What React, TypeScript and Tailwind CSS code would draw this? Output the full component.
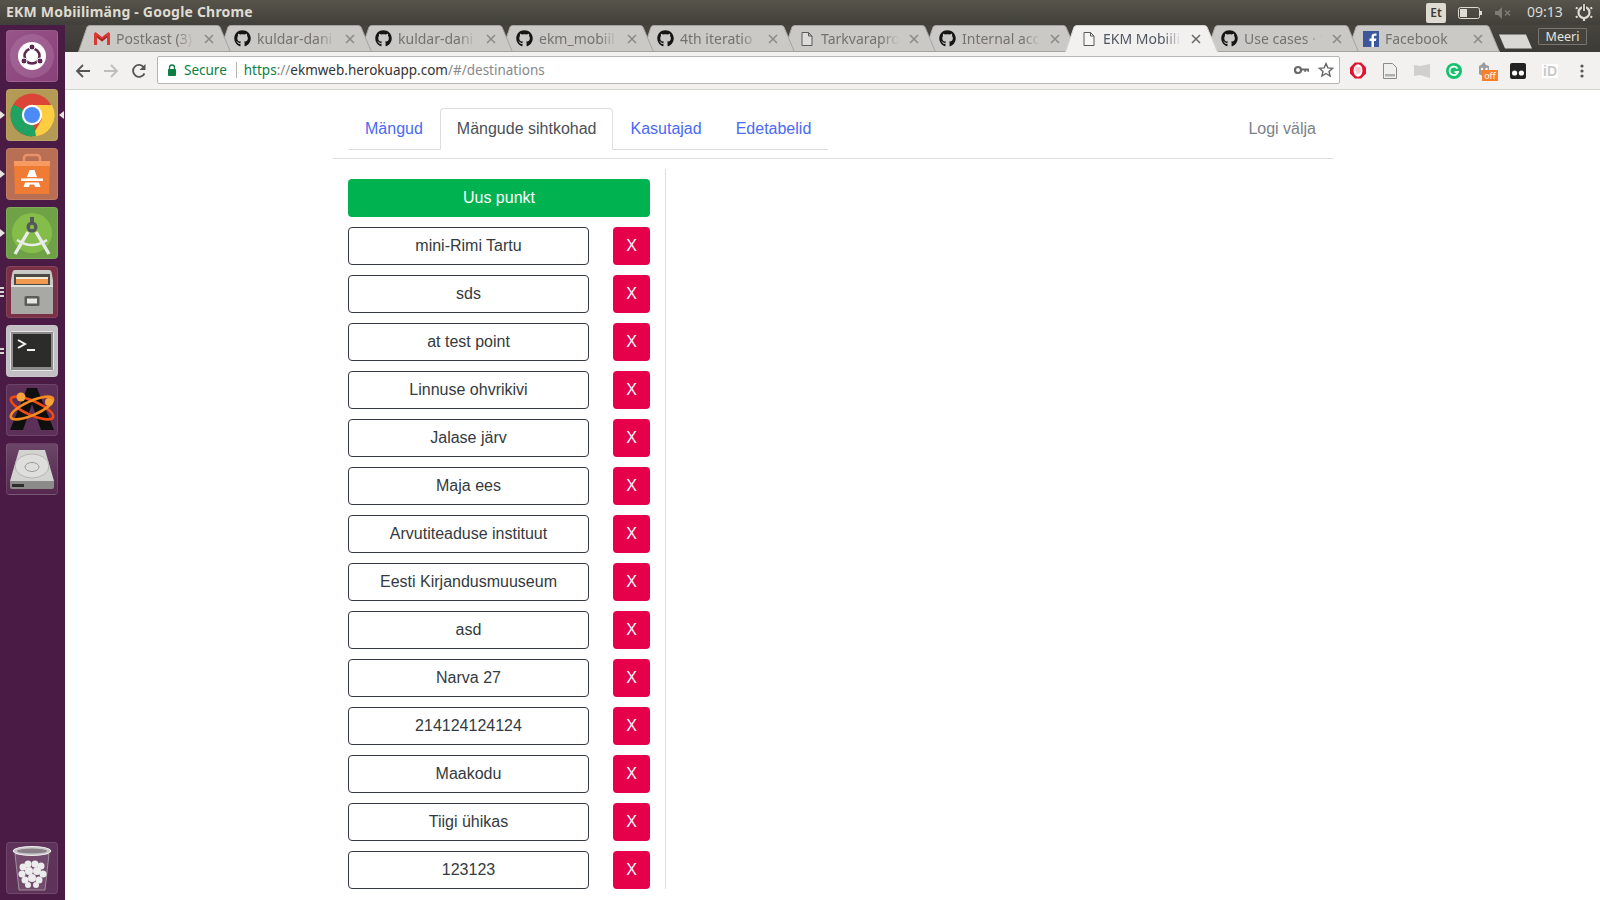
import React from "react";
import { FaGithub } from "react-icons/fa";

const rows = ["mini-Rimi Tartu","sds","at test point","Linnuse ohvrikivi","Jalase järv","Maja ees","Arvutiteaduse instituut","Eesti Kirjandusmuuseum","asd","Narva 27","214124124124","Maakodu","Tiigi ühikas","123123"];

const Gmail = () => (
  <svg width="16" height="13" viewBox="0 0 16 13" className="shrink-0">
    <path d="M0 1.5V13h3V5.5L8 9.5l5-4V13h3V1.5L14.5 0 8 5 1.5 0z" fill="#db3a34" />
    <path d="M3 5.5 8 9.5l5-4V3.4L8 7.2 3 3.4z" fill="#a82a28" />
  </svg>
);
const FileIcon = () => (
  <svg width="16" height="16" viewBox="0 0 16 16" className="shrink-0">
    <path d="M3 1.5h6.5L13 5v9.5H3z M9.5 1.5V5H13" fill="#fff" fillOpacity="0.35" stroke="#5a5a5a" strokeWidth="1" />
  </svg>
);
const Fb = () => (
  <svg width="16" height="16" viewBox="0 0 16 16" className="shrink-0">
    <rect width="16" height="16" fill="#3b5998" />
    <path d="M11 16V10h2l.4-2.4H11V6c0-.8.3-1.2 1.2-1.2h1.3V2.6C13 2.5 12.4 2.5 11.7 2.5 9.8 2.5 8.5 3.6 8.5 5.7v1.9h-2V10h2v6z" fill="#fff" />
  </svg>
);
const Gh = () => <FaGithub className="shrink-0 text-[#161514]" size={17} />;

const tabs: { t: string; i: React.ReactNode; active?: boolean }[] = [
  { t: "Postkast (3)", i: <Gmail /> },
  { t: "kuldar-dani", i: <Gh /> },
  { t: "kuldar-dani", i: <Gh /> },
  { t: "ekm_mobiil", i: <Gh /> },
  { t: "4th iteratio", i: <Gh /> },
  { t: "Tarkvarapro", i: <FileIcon /> },
  { t: "Internal acc", i: <Gh /> },
  { t: "EKM Mobiili", i: <FileIcon />, active: true },
  { t: "Use cases · S", i: <Gh /> },
  { t: "Facebook", i: <Fb /> },
];

function Tab({ t, i, active, index }: { t: string; i: React.ReactNode; active?: boolean; index: number }) {
  return (
    <div className="relative w-[153px] h-[27px] -mr-[12px] shrink-0" style={{ zIndex: active ? 30 : 20 - index }}>
      <svg width="153" height="27" viewBox="0 0 153 27" className="absolute inset-0">
        <path d="M0.5 27 L9 2 Q10 0.5 12 0.5 L139 0.5 Q141 0.5 142 2 L152.5 27 Z" fill={active ? "#f2f1f0" : "#cbc9c6"} />
        <path d="M0.5 27 L9 2 Q10 0.5 12 0.5 L139 0.5 Q141 0.5 142 2 L152.5 27" fill="none" stroke={active ? "#d6d4d1" : "#a5a3a0"} strokeWidth="1" />
        {!active && <path d="M0 26.5 H153" stroke="#a5a3a0" strokeWidth="1" />}
      </svg>
      <div className="relative flex items-center h-full pl-[15px] pr-[17px]">
        <span className="w-[17px] flex justify-center">{i}</span>
        <span
          className={`ml-[6px] w-[78px] whitespace-nowrap text-[14px] leading-[25px] [font-family:'Noto_Sans',sans-serif] [mask-image:linear-gradient(to_right,black_78%,transparent_100%)] ${active ? "text-[#4f5761]" : "text-[#74726e]"}`}
        >
          {t}
        </span>
        <svg width="10" height="10" viewBox="0 0 10 10" className="ml-auto">
          <path d="M1 1 9 9M9 1 1 9" stroke={active ? "#666" : "#8b8986"} strokeWidth="1.5" />
        </svg>
      </div>
    </div>
  );
}

const Tile = ({ className, children, pipsL = 0, pipR = false }: { className: string; children: React.ReactNode; pipsL?: number; pipR?: boolean }) => (
  <div className="relative h-[52px] w-[52px] ml-[6px] shrink-0">
    <div className={`h-full w-full rounded-[4px] overflow-hidden flex items-center justify-center border border-white/10 ${className}`}>{children}</div>
    {pipsL === 1 && (
      <svg width="5" height="8" viewBox="0 0 5 8" className="absolute left-[-6px] top-[22px]"><path d="M0 0 5 4 0 8z" fill="#e8e4e0" /></svg>
    )}
    {pipsL > 1 && (
      <div className="absolute left-[-6px] top-0 bottom-0 flex flex-col justify-center gap-[1.5px]">
        {Array.from({ length: pipsL }).map((_, k) => <div key={k} className="h-[2.5px] w-[4px] bg-[#d8d4d0]" />)}
      </div>
    )}
    {pipR && (
      <svg width="5" height="8" viewBox="0 0 5 8" className="absolute right-[-6px] top-[22px]"><path d="M5 0 0 4 5 8z" fill="#e8e4e0" /></svg>
    )}
  </div>
);

const UbuntuIcon = () => (
  <svg width="50" height="50" viewBox="0 0 50 50">
    <circle cx="25" cy="25" r="22" fill="#c08db5" fillOpacity="0.3" />
    <circle cx="25" cy="25" r="14" fill="#fff" />
    <circle cx="25" cy="25" r="7.5" fill="none" stroke="#5e2750" strokeWidth="2.6" />
    <circle cx="25" cy="16" r="3" fill="#5e2750" stroke="#fff" strokeWidth="1" />
    <circle cx="17" cy="30" r="3" fill="#5e2750" stroke="#fff" strokeWidth="1" />
    <circle cx="33" cy="30" r="3" fill="#5e2750" stroke="#fff" strokeWidth="1" />
  </svg>
);
const ChromeIcon = () => (
  <svg width="46" height="46" viewBox="0 0 46 46">
    <circle cx="23" cy="23" r="21.5" fill="#db4437" />
    <path d="M4.4 12.2 23 23l-10.7 18.6A21.5 21.5 0 0 1 4.4 12.2z" fill="#1ea362" />
    <path d="M23 13H43A21.5 21.5 0 0 1 23 44.5L33 27z" fill="#ffcd40" />
    <path d="M12.3 41.6 23 23l4 21.1A21.5 21.5 0 0 1 12.3 41.6z" fill="#1ea362" />
    <circle cx="23" cy="23" r="10.2" fill="#fff" />
    <circle cx="23" cy="23" r="8" fill="#4c8bf5" />
  </svg>
);
const StoreIcon = () => (
  <svg width="46" height="46" viewBox="0 0 46 46">
    <path d="M15 12V7a3 3 0 0 1 3-3h10a3 3 0 0 1 3 3v5" fill="none" stroke="#e8916a" strokeWidth="2.5" />
    <path d="M5 10h36l-1 33H6z" fill="#f07b35" />
    <path d="M5 10h36v5H5z" fill="#f59a62" />
    <path d="M20.5 19h5l6 17H26l-.8-2.6h-4.4L20 36h-5.5z" fill="#fff" />
    <path d="M12 26h22v1.4H12zM12 30h22v1.4H12z" fill="#f07b35" />
    <path d="M12 27.4h22v2.6H12z" fill="#fff" />
  </svg>
);
const StudioIcon = () => (
  <svg width="50" height="50" viewBox="0 0 50 50">
    <circle cx="25" cy="25" r="20" fill="#84bd4a" />
    <circle cx="25" cy="19" r="5.5" fill="#55585a" />
    <circle cx="25" cy="19" r="2.2" fill="#84bd4a" />
    <path d="M25 9v5" stroke="#55585a" strokeWidth="4" />
    <path d="M21 24 8 46M29 24l13 22" stroke="#e9ecea" strokeWidth="3.4" fill="none" />
    <path d="M10 32q15 10 30 0" stroke="#e9ecea" strokeWidth="2.6" fill="none" />
  </svg>
);
const FilesIcon = () => (
  <svg width="46" height="48" viewBox="0 0 46 48">
    <path d="M6 2h34q2 0 2.5 2L44 12v33q0 1-1 1H3q-1 0-1-1V12l1.5-8Q4 2 6 2z" fill="#c9c9c5" />
    <path d="M5 6h36v12H5z" fill="#4a4a46" />
    <path d="M7 9h32v2H7z" fill="#f4e6d0" />
    <path d="M7 11h32v5H7z" fill="#f09a50" />
    <path d="M2 17h42v29H2z" fill="#a8a8a4" />
    <path d="M2 17h42v2H2z" fill="#dededa" />
    <rect x="15.5" y="28" width="15" height="10" rx="1.5" fill="#5c5c58" />
    <rect x="18" y="30.5" width="10" height="5" fill="#e6e6e2" />
  </svg>
);
const TermIcon = () => (
  <svg width="44" height="40" viewBox="0 0 44 40">
    <rect x="0.5" y="0.5" width="43" height="39" rx="1" fill="#8c8c8a" stroke="#e4e4e4" />
    <rect x="3" y="3" width="38" height="33" fill="#2c2c2a" />
    <path d="M8 9l7 4-7 4" fill="none" stroke="#f2f2f2" strokeWidth="2" />
    <path d="M17 19h8" stroke="#f2f2f2" strokeWidth="2" />
  </svg>
);
const AtomIcon = () => (
  <svg width="50" height="50" viewBox="0 0 50 50">
    <path d="M20 3h10l17 42H34L25 19 16 45H3z" fill="#0f0f10" />
    <ellipse cx="25" cy="23" rx="23" ry="7" transform="rotate(24 25 23)" fill="none" stroke="#f04a12" strokeWidth="2.6" />
    <ellipse cx="25" cy="23" rx="23" ry="7" transform="rotate(-24 25 23)" fill="none" stroke="#f58a1f" strokeWidth="2.6" />
    <circle cx="14" cy="12" r="4.5" fill="#f5a33a" />
    <circle cx="42" cy="17" r="4" fill="#f5a33a" />
  </svg>
);
const DiskIcon = () => (
  <svg width="46" height="44" viewBox="0 0 46 44">
    <path d="M10 3h26l9 31H1z" fill="#d3d3d1" />
    <path d="M1 34h44v6a2 2 0 0 1-2 2H3a2 2 0 0 1-2-2z" fill="#8b8b89" />
    <path d="M3 37h12v3H3z" fill="#2d2d2b" />
    <ellipse cx="23" cy="19" rx="17" ry="12" fill="#dededc" stroke="#b4b4b2" />
    <ellipse cx="23" cy="20" rx="7" ry="4.5" fill="none" stroke="#9a9a98" />
  </svg>
);
const TrashIcon = () => (
  <svg width="44" height="48" viewBox="0 0 44 48">
    <path d="M5 10l4 36h26l4-36z" fill="#ffffff" fillOpacity="0.12" stroke="#a9a4a8" strokeWidth="0.8" />
    <ellipse cx="22" cy="7" rx="19" ry="4.5" fill="#c9c7c9" stroke="#eeeeee" />
    <ellipse cx="22" cy="7" rx="15" ry="2.5" fill="#8a8088" />
    <g fill="#ececec">
      <circle cx="13" cy="23" r="3.5" /><circle cx="18" cy="20" r="3.5" /><circle cx="25" cy="20" r="3.5" /><circle cx="31" cy="22" r="3.5" />
      <circle cx="12" cy="30" r="3.5" /><circle cx="19" cy="27" r="4" /><circle cx="27" cy="27" r="4" /><circle cx="33" cy="30" r="3.5" />
      <circle cx="15" cy="36" r="3.5" /><circle cx="22" cy="34" r="4" /><circle cx="29" cy="36" r="3.5" /><circle cx="18" cy="41" r="3" /><circle cx="26" cy="41" r="3" />
    </g>
  </svg>
);

const Ext = ({ x }: { x: React.ReactNode }) => <div className="w-[32px] flex items-center justify-center">{x}</div>;

export default function App() {
  return (
    <div className="w-[1600px] h-[900px] overflow-hidden flex flex-col bg-white [font-family:'Liberation_Sans',Arial,sans-serif]">
      <header className="h-[25px] shrink-0 flex items-center bg-gradient-to-b from-[#57544b] to-[#403f39] pl-[6px] [font-family:'Noto_Sans',sans-serif]">
        <span className="text-[14px] font-bold text-[#dfdbd2] leading-none tracking-[0.2px] mb-[2px]">EKM Mobiilimäng - Google Chrome</span>
        <div className="ml-auto flex items-center h-full">
          <div className="w-[20px] h-[20px] rounded-[2px] bg-[#dfdbd2] text-[#3c3b37] text-[12px] font-semibold flex items-center justify-center">Et</div>
          <svg width="24" height="12" viewBox="0 0 24 12" className="ml-[12px]">
            <rect x="0.5" y="0.5" width="21" height="11" rx="2" fill="none" stroke="#dfdbd2" />
            <rect x="2" y="2" width="7" height="8" fill="#dfdbd2" />
            <rect x="22" y="4" width="2" height="4" fill="#dfdbd2" />
          </svg>
          <svg width="18" height="12" viewBox="0 0 18 12" className="ml-[13px]">
            <path d="M0 4h3l4-4v12L3 8H0z" fill="#7d7b74" />
            <path d="M10 3.5l5 5M15 3.5l-5 5" stroke="#7d7b74" strokeWidth="1.5" />
          </svg>
          <span className="ml-[14px] text-[14px] leading-none mb-[2px] text-[#dfdbd2] w-[36px]">09:13</span>
          <svg width="18" height="18" viewBox="0 0 18 18" className="ml-[12px] mr-[7px] mb-[1px]">
            <circle cx="9" cy="9.5" r="5.5" fill="none" stroke="#dfdbd2" strokeWidth="2.2" />
            <path d="M9 1v7" stroke="#403f39" strokeWidth="4" />
            <path d="M9 1v7" stroke="#dfdbd2" strokeWidth="1.8" />
            <path d="M2.6 5.6.8 4.6M15.4 5.6l1.8-1M2.6 13.4l-1.8 1M15.4 13.4l1.8 1M9 15v3" stroke="#dfdbd2" strokeWidth="2.2" />
          </svg>
        </div>
      </header>

      <div className="flex flex-1 min-h-0">
        <aside className="w-[65px] shrink-0 bg-[#4a1b45] flex flex-col gap-[7px] pt-[5px] pb-[6px]">
          <Tile className="bg-gradient-to-br from-[#96558a] to-[#8a4179]"><UbuntuIcon /></Tile>
          <Tile className="bg-[#b39a55]" pipsL={1} pipR><ChromeIcon /></Tile>
          <Tile className="bg-[#b96f53]" pipsL={1}><StoreIcon /></Tile>
          <Tile className="bg-[#6fa246]" pipsL={1}><StudioIcon /></Tile>
          <Tile className="bg-[#7a3047]" pipsL={3}><FilesIcon /></Tile>
          <Tile className="bg-[#c2c0c2]" pipsL={2}><TermIcon /></Tile>
          <Tile className="bg-[#5d3059]"><AtomIcon /></Tile>
          <Tile className="bg-gradient-to-b from-[#6b4567] to-[#55294f]"><DiskIcon /></Tile>
          <div className="mt-auto"><Tile className="bg-[#5f3359]"><TrashIcon /></Tile></div>
        </aside>

        <main className="flex-1 min-w-0 flex flex-col">
          <div className="h-[27px] shrink-0 flex bg-gradient-to-b from-[#46443d] to-[#3c3b37] pl-[13px] relative">
            {tabs.map((tb, idx) => <Tab key={idx} index={idx} {...tb} />)}
            <svg width="34" height="15" viewBox="0 0 34 15" className="ml-[11px] mt-[9px] shrink-0 relative z-10">
              <path d="M0 0.5H27L33 14.5H6z" fill="#dad8d5" />
            </svg>
            <div className="ml-[5px] mt-[3px] w-[49px] h-[17px] border border-[#77756f] rounded-[1px] text-[12.5px] leading-[15px] text-center text-[#e6e3de] bg-[#45433d] [font-family:'Noto_Sans',sans-serif]">Meeri</div>
          </div>

          <div className="h-[38px] shrink-0 bg-[#f2f1f0] border-b border-[#d4d2cf] flex items-center pl-[8px]">
            <svg width="18" height="18" viewBox="0 0 18 18" className="ml-[1px]"><path d="M16 9H3M9 3 3 9l6 6" fill="none" stroke="#555" strokeWidth="1.8" /></svg>
            <svg width="18" height="18" viewBox="0 0 18 18" className="ml-[10px]"><path d="M2 9h13M9 3l6 6-6 6" fill="none" stroke="#bfbdbb" strokeWidth="1.8" /></svg>
            <svg width="18" height="18" viewBox="0 0 18 18" className="ml-[10px]"><path d="M14.5 11.5A6 6 0 1 1 14 5.5" fill="none" stroke="#555" strokeWidth="1.8" /><path d="M15.5 2v6h-6z" fill="#555" /></svg>
            <div className="ml-[9px] w-[1183px] h-[28px] -mt-[1px] bg-white border border-[#b7b5b2] rounded-[2px] flex items-center pl-[9px] pr-[5px] text-[13.5px] [font-family:'Noto_Sans',sans-serif]">
              <svg width="10" height="12" viewBox="0 0 10 12"><path d="M2.5 5V3.5a2.5 2.5 0 0 1 5 0V5" fill="none" stroke="#0b8043" strokeWidth="1.3" /><rect x="1" y="5" width="8" height="7" rx="0.8" fill="#0b8043" /></svg>
              <span className="ml-[7px] mt-[1px] text-[#0b8043]">Secure</span>
              <div className="ml-[9px] w-px h-[16px] bg-[#b5b3b0]" />
              <span className="ml-[7px] mt-[1px] whitespace-nowrap"><span className="text-[#0b8043]">https</span><span className="text-[#888]">://</span><span className="text-[#333]">ekmweb.herokuapp.com</span><span className="text-[#888]">/#/destinations</span></span>
              <svg width="15" height="10" viewBox="0 0 15 10" className="ml-auto"><circle cx="4" cy="5" r="3" fill="none" stroke="#6a6a6a" strokeWidth="2.2" /><path d="M7 3.6h8v3.2h-1.6V5.6h-1.2v1.2h-2V5.6H7z" fill="#6a6a6a" /></svg>
              <svg width="16" height="16" viewBox="0 0 16 16" className="ml-[9px]"><path d="M8 1.6l1.9 4.3 4.7.4-3.6 3.1 1.1 4.6L8 11.5 3.9 14l1.1-4.6L1.4 6.3l4.7-.4z" fill="none" stroke="#666" strokeWidth="1.4" /></svg>
            </div>
            <div className="ml-[2px] flex items-center">
              <Ext x={<svg width="16" height="17" viewBox="0 0 18 18"><path d="M5.5 0h7L18 5.5v7L12.5 18h-7L0 12.5v-7z" fill="#e1132f" /><ellipse cx="9" cy="9" rx="5" ry="7" fill="#fff" /><path d="M6 9V5h6v6l-2 2H8z" fill="#f6c9cf" /></svg>} />
              <Ext x={<svg width="14" height="16" viewBox="0 0 14 16"><path d="M.5.5h9l4 4v11H.5z" fill="#efefed" stroke="#8a8a88" /><rect x="2" y="11" width="10" height="2.5" fill="#b0b0ae" /></svg>} />
              <Ext x={<svg width="16" height="14" viewBox="0 0 16 14"><path d="M0 1l6 1 10-2v14L6 11 0 12z" fill="#d0cfcd" /></svg>} />
              <Ext x={<svg width="16" height="16" viewBox="0 0 16 16"><circle cx="8" cy="8" r="8" fill="#15c26b" /><path d="M11.5 5.5A4.3 4.3 0 1 0 12 9H8.5" fill="none" stroke="#fff" strokeWidth="1.8" /></svg>} />
              <div className="relative w-[32px] h-[20px] flex items-center justify-center">
                <svg width="14" height="16" viewBox="0 0 14 16" className="-mt-[2px] -ml-[4px]"><path d="M7 0l2 3 3 1v8l-5 3-5-3V4l2-1z" fill="#9a9ca0" /><circle cx="5" cy="7" r="1.2" fill="#fff" /><circle cx="9.5" cy="7" r="1.2" fill="#fff" /></svg>
                <span className="absolute left-[12px] top-[9px] w-[16px] h-[11px] bg-[#f97f2a] text-white text-[9px] leading-[11px] text-center [font-family:'Noto_Sans',sans-serif]">off</span>
              </div>
              <Ext x={<svg width="16" height="16" viewBox="0 0 16 16"><rect width="16" height="16" rx="2" fill="#222" /><circle cx="4.6" cy="10" r="2.6" fill="#fff" /><circle cx="11.4" cy="10" r="2.6" fill="#fff" /></svg>} />
              <Ext x={<span className="text-[14px] font-bold text-[#c9c9c7] leading-none bg-white px-[1px] [font-family:'Liberation_Sans',sans-serif]">iD</span>} />
              <Ext x={<svg width="4" height="14" viewBox="0 0 4 14"><circle cx="2" cy="2" r="1.6" fill="#555" /><circle cx="2" cy="7" r="1.6" fill="#555" /><circle cx="2" cy="12" r="1.6" fill="#555" /></svg>} />
            </div>
          </div>

          <div className="w-[1000px] ml-[268px] pt-[18px] text-[16px] leading-[24px]">
            <nav className="flex justify-between items-start">
              <ul className="flex ml-[16px] border-b border-[#ddd] h-[42px] whitespace-nowrap">
                <li className="pl-[16px] pr-[17px] pt-[9px] text-[#4a69f5]">Mängud</li>
                <li className="px-[16px] pt-[8px] h-[42px] bg-white border border-[#ddd] border-b-white rounded-t-[4px] text-[#495057]">Mängude sihtkohad</li>
                <li className="px-[17px] pt-[9px] text-[#4a69f5]">Kasutajad</li>
                <li className="px-[17px] pt-[9px] text-[#4a69f5]">Edetabelid</li>
              </ul>
              <span className="px-[17px] pt-[9px] text-[#7b8288]">Logi välja</span>
            </nav>
            <div className="mt-[8px] border-t border-[#ddd]" />
            <section className="mt-[10px] w-[333px] border-r border-[#ddd] px-[15px] pt-[10px] flex flex-col gap-[10px]">
              <div className="h-[38px] rounded-[4px] bg-[#00b350] text-white flex items-center justify-center">Uus punkt</div>
              {rows.map((r, i) => (
                <div key={i} className="flex justify-between">
                  <div className="w-[241px] h-[38px] rounded-[4px] border border-[#343a40] text-[#343a40] flex items-center justify-center">{r}</div>
                  <div className="w-[37px] h-[38px] rounded-[4px] bg-[#e6004c] text-white flex items-center justify-center">X</div>
                </div>
              ))}
            </section>
          </div>
        </main>
      </div>
    </div>
  );
}
